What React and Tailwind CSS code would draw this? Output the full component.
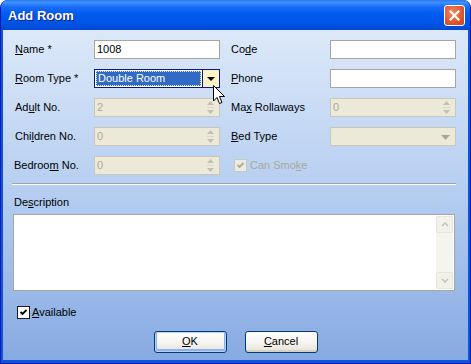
import React from 'react';

const FONT = { fontFamily: '"Liberation Sans", Arial, sans-serif' };

/* Label with one underlined mnemonic letter */
function Mn({ pre = '', k, post = '', disabled = false }) {
  return (
    <span className={disabled ? 'text-[#aca899]' : 'text-black'}>
      {pre}
      <span className="underline underline-offset-[1px]">{k}</span>
      {post}
    </span>
  );
}

function TextBox({ value = '' }) {
  return (
    <div className="h-[19px] border border-[#a7a69e] bg-white px-[2px] text-[11px] leading-[17px] text-black">
      {value}
    </div>
  );
}

function SpinBox({ value }) {
  return (
    <div className="relative h-[19px] border border-[#c9c7ba] bg-[#ece9d8] px-[2px] text-[11px] leading-[17px] text-[#aca899]">
      {value}
      <div className="absolute right-[5px] top-[2px] flex h-[13px] flex-col items-center justify-between">
        <svg width="7" height="4" viewBox="0 0 7 4"><path d="M3.5 0 L7 4 L0 4 Z" fill="#c2c0b3" /></svg>
        <div className="h-px w-[7px] bg-[#dcdacd]" />
        <svg width="7" height="4" viewBox="0 0 7 4"><path d="M0 0 L7 0 L3.5 4 Z" fill="#c2c0b3" /></svg>
      </div>
    </div>
  );
}

function ComboDisabled() {
  return (
    <div className="relative h-[19px] border border-[#c9c7ba] bg-[#ece9d8]">
      <svg className="absolute right-[5px] top-[7px]" width="9" height="5" viewBox="0 0 9 5">
        <path d="M0 0 L9 0 L4.5 5 Z" fill="#aca899" />
      </svg>
    </div>
  );
}

function ComboFocused({ value }) {
  return (
    <div className="flex h-[19px] border border-[#0a1a78] bg-white">
      <div className="m-[1px] flex-1 border border-dotted border-[#e8e8e8] bg-[#316ac5] px-[1px] text-[11px] leading-[13px] text-white">
        {value}
      </div>
      <div className="flex w-[17px] items-center justify-center border-l border-[#0a1a78] bg-[#fdf1c6]">
        <svg width="8" height="4" viewBox="0 0 8 4"><path d="M0 0 L8 0 L4 4 Z" fill="#000" /></svg>
      </div>
    </div>
  );
}

function Check({ checked, disabled }) {
  return (
    <div
      className={`flex h-[13px] w-[13px] items-center justify-center border ${
        disabled ? 'border-[#cac8bb] bg-[#ecebe3]' : 'border-[#1c1c1c] bg-white'
      }`}
    >
      {checked && (
        <svg width="9" height="9" viewBox="0 0 9 9">
          <path d="M1.5 4 L3.5 6 L7.5 2" fill="none" stroke={disabled ? '#aca899' : '#000'} strokeWidth="1.8" />
        </svg>
      )}
    </div>
  );
}

function XPButton({ children, isDefault }) {
  return (
    <div
      className={`flex h-[22px] w-[73px] items-center justify-center rounded-[3px] border border-[#003c74] bg-gradient-to-b from-white via-[#f6f5f0] to-[#e3e2da] text-[11px] text-black ${
        isDefault ? 'shadow-[inset_0_0_0_1px_#b9d1f9,inset_0_-1px_0_2px_#90b2ea]' : 'shadow-[inset_0_-2px_0_#d6d0c5]'
      }`}
    >
      {children}
    </div>
  );
}

export default function App() {
  return (
    <div className="relative h-[364px] w-[471px] bg-white" style={FONT}>
      <div className="flex h-full flex-col overflow-hidden rounded-t-[8px] border-x border-b border-[#0019b0] bg-[#0a54de]">
        {/* Title bar */}
        <div className="flex h-[30px] shrink-0 items-center justify-between bg-[linear-gradient(to_bottom,#2a78f0_0%,#3d92ff_8%,#1c6ef7_22%,#005bf0_45%,#0055e6_75%,#0049d6_100%)] pl-[7px] pr-[5px]">
          <span className="text-[13px] font-bold leading-none text-white [text-shadow:1px_1px_0_#0a1f78]">Add Room</span>
          <div className="flex h-[21px] w-[21px] items-center justify-center rounded-[3px] border border-white bg-[radial-gradient(circle_at_40%_35%,#f08a62_0%,#e2582f_55%,#c8401c_100%)]">
            <svg width="11" height="11" viewBox="0 0 11 11">
              <path d="M1.5 1.5 L9.5 9.5 M9.5 1.5 L1.5 9.5" stroke="#fff" strokeWidth="2.2" strokeLinecap="square" />
            </svg>
          </div>
        </div>

        {/* Client area */}
        <div className="mx-[2px] mb-[3px] flex-1 bg-gradient-to-b from-[#dde9f9] via-[#b4cdf0] to-[#87aae2] text-[11px]">
          <div className="grid grid-cols-[79px_126px_110px_126px] items-center gap-y-[10px] pl-[12px] pt-[10px]">
            <Mn k="N" post="ame *" />
            <TextBox value="1008" />
            <span className="pl-[11px]"><Mn pre="Co" k="d" post="e" /></span>
            <TextBox />

            <Mn k="R" post="oom Type *" />
            <ComboFocused value="Double Room" />
            <span className="pl-[11px]"><Mn k="P" post="hone" /></span>
            <TextBox />

            <Mn pre="Ad" k="u" post="lt No." />
            <SpinBox value="2" />
            <span className="pl-[11px]"><Mn pre="Ma" k="x" post=" Rollaways" /></span>
            <SpinBox value="0" />

            <Mn pre="Chi" k="l" post="dren No." />
            <SpinBox value="0" />
            <span className="pl-[11px]"><Mn k="B" post="ed Type" /></span>
            <ComboDisabled />

            <span className="-ml-px"><Mn pre="Bedroo" k="m" post=" No." /></span>
            <SpinBox value="0" />
            <div className="col-span-2 flex items-center gap-[3px] pl-[14px]">
              <Check checked disabled />
              <Mn pre="Can Smo" k="k" post="e" disabled />
            </div>
          </div>

          <div className="ml-[9px] mt-[8px] h-[2px] w-[444px] border-t border-[#a2a49e] bg-white" />

          <div className="ml-[11px] mt-[11px] leading-[13px]">
            <Mn pre="De" k="s" post="cription" />
          </div>

          <div className="ml-[10px] mt-[5px] flex h-[77px] w-[442px] border border-[#a7a69e] bg-white">
            <div className="flex-1" />
            <div className="my-px mr-px flex w-[17px] flex-col justify-between bg-[#f5f4ef]">
              <div className="flex h-[17px] items-center justify-center rounded-[2px] border border-[#e6e4dc] bg-[#f2f1ea]">
                <svg width="8" height="5" viewBox="0 0 8 5"><path d="M1 4 L4 1 L7 4" fill="none" stroke="#c5c3b6" strokeWidth="1.5" /></svg>
              </div>
              <div className="flex h-[17px] items-center justify-center rounded-[2px] border border-[#e6e4dc] bg-[#f2f1ea]">
                <svg width="8" height="5" viewBox="0 0 8 5"><path d="M1 1 L4 4 L7 1" fill="none" stroke="#c5c3b6" strokeWidth="1.5" /></svg>
              </div>
            </div>
          </div>

          <div className="ml-[14px] mt-[13px] flex items-center gap-[2px]">
            <Check checked />
            <Mn k="A" post="vailable" />
          </div>

          <div className="mt-[10px] flex justify-center gap-[18px]">
            <XPButton isDefault><Mn k="O" post="K" /></XPButton>
            <XPButton><Mn k="C" post="ancel" /></XPButton>
          </div>
        </div>
      </div>

      {/* Mouse pointer */}
      <svg className="absolute left-[213px] top-[85px]" width="13" height="20" viewBox="0 0 13 20">
        <path d="M0.5 0.5 L0.5 16 L4 12.5 L6.5 18.5 L9 17.5 L6.5 11.5 L11.5 11.5 Z" fill="#fff" stroke="#000" strokeWidth="1" strokeLinejoin="miter" />
      </svg>
    </div>
  );
}
